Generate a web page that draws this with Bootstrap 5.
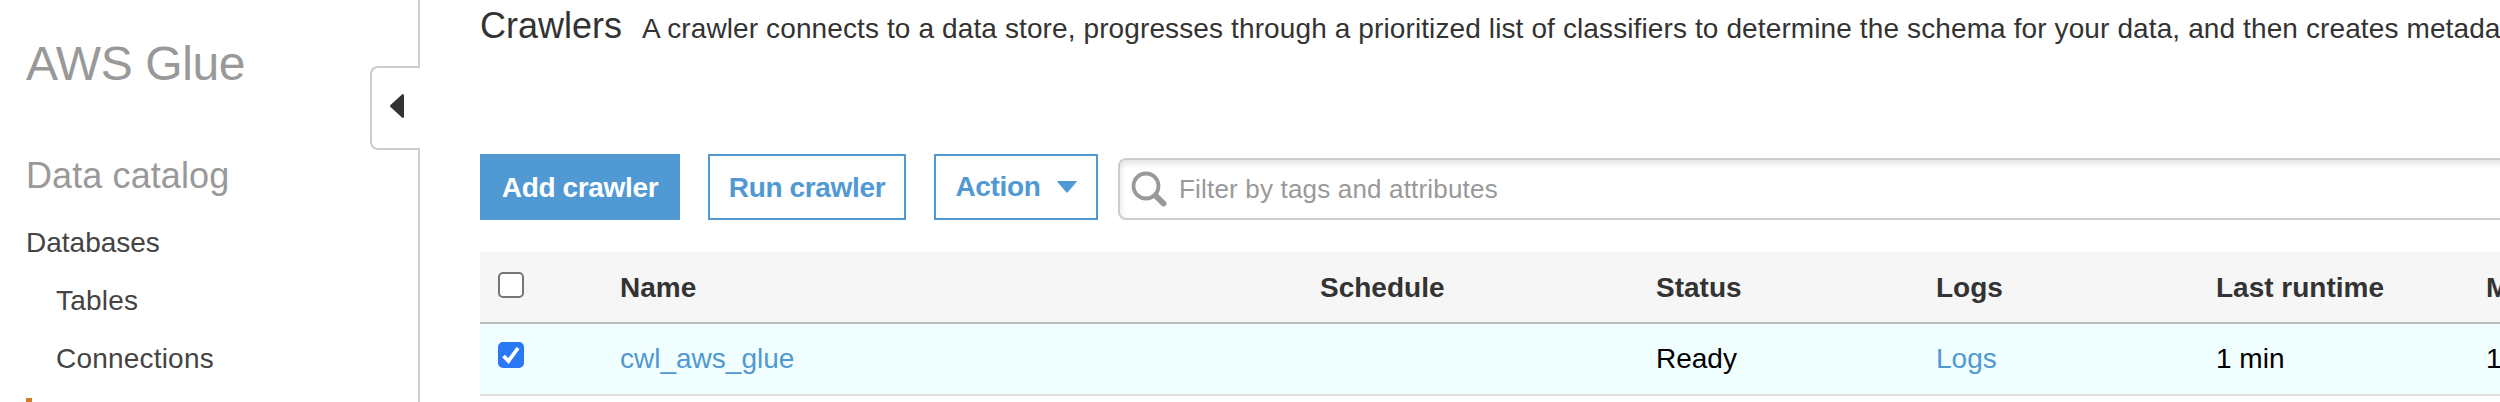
<!DOCTYPE html>
<html lang="en">
<head>
<meta charset="utf-8">
<title>AWS Glue - Crawlers</title>
<link href="https://cdn.jsdelivr.net/npm/bootstrap@5.3.0/dist/css/bootstrap.min.css" rel="stylesheet">
<style>
body{font-family:"Liberation Sans",Arial,sans-serif;font-size:28px;line-height:40px;color:#333;height:402px}
.sidebar{width:420px;border-right:2px solid #ccc;padding:36px 0 0 26px}
.brand-title{font-size:48px;line-height:56px;color:#999;letter-spacing:-.4px}
.section-title{font-size:36px;line-height:44px;color:#999;margin-top:62px;letter-spacing:.1px}
.side-links{margin-top:16px;line-height:58px}
.side-links a{color:#444}
.sub-link{padding-left:30px;letter-spacing:.2px}
.current-link{border-left:6px solid #d17b2c;height:4px;margin-top:10px}
.collapse-tab{top:66px;right:-2px;width:50px;height:84px;border:2px solid #ccc;border-right:0;border-radius:8px 0 0 8px}
.collapse-tab svg{margin:0 0 4px 18px}
.content-pane{padding:4px 0 0 60px;min-width:0}
.page-head{height:44px}
.page-title{font-size:36px;line-height:44px}
.page-intro{letter-spacing:.115px}
.toolbar{margin-top:106px;height:66px}
.btn-glue{--bs-btn-border-radius:0;--bs-btn-border-width:2px;--bs-btn-padding-x:0;--bs-btn-padding-y:0;--bs-btn-font-size:28px;--bs-btn-font-weight:700;--bs-btn-line-height:64px;--bs-btn-color:#5199d3;--bs-btn-border-color:#5199d3;--bs-btn-bg:#fff;height:66px;letter-spacing:-.35px}
.btn-glue-fill{--bs-btn-bg:#5199d3;--bs-btn-color:#fff}
.w-add{width:200px}.w-run{width:198px}.w-action{width:164px}
.filter-box{height:62px;margin:0 -20px 0 20px;border:2px solid #ccc;border-radius:8px;box-shadow:inset 0 3px 6px rgba(0,0,0,.12);padding-left:11px}
.filter-box input{border:0;outline:0;background:transparent;font-size:26px;letter-spacing:.18px;padding:0;margin-left:12px;height:40px}
.filter-box input::placeholder{color:#999;opacity:1}
.crawler-table{table-layout:fixed;width:2040px;margin-top:32px;--bs-table-bg:transparent;border-collapse:separate;border-spacing:0}
.crawler-table>:not(caption)>*>*{padding:0 0 0 18px;height:72px;vertical-align:middle;border-width:0;border-bottom:2px solid #ddd;color:#000;white-space:nowrap;box-shadow:none}
.crawler-table>thead>tr>th{height:72px;padding-top:2px;background:#f6f6f6;color:#333;border-bottom-color:#bbb}
.crawler-table>thead{border:0}
.crawler-table>tbody>tr>td{background:#f0feff}
.crawler-table a{color:#5199d3}
.crawler-table .form-check-input{display:block;width:26px;height:26px;margin:0 0 6px;border:2px solid #767676;border-radius:5px}
.crawler-table .form-check-input:checked{margin-bottom:8px;background-color:#2b78f6;border-color:#2b78f6;background-image:none}
.tick{left:0;top:0;pointer-events:none}
</style>
<script src="https://cdn.jsdelivr.net/npm/bootstrap@5.3.0/dist/js/bootstrap.bundle.min.js"></script>
</head>
<body class="d-flex overflow-hidden bg-white">
<nav class="sidebar position-relative flex-shrink-0">
  <h1 class="brand-title fw-normal mb-0">AWS Glue</h1>
  <h2 class="section-title fw-normal mb-0">Data catalog</h2>
  <ul class="side-links list-unstyled mb-0">
    <li><a class="text-decoration-none" href="#">Databases</a></li>
    <li class="sub-link"><a class="text-decoration-none" href="#">Tables</a></li>
    <li class="sub-link"><a class="text-decoration-none" href="#">Connections</a></li>
    <li class="current-link"></li>
  </ul>
  <div class="collapse-tab position-absolute bg-white d-flex align-items-center">
    <svg width="14" height="24" viewBox="0 0 14 24"><path d="M12.5 0Q14 0 14 1.5V22.500Q14 24 12.500 24L.5 13Q-.4 12 .5 11Z" fill="#333"/></svg>
  </div>
</nav>
<main class="content-pane flex-grow-1 overflow-hidden">
  <header class="page-head d-flex align-items-baseline text-nowrap">
    <h2 class="page-title fw-normal mb-0">Crawlers</h2>
    <span class="page-intro ms-3 ps-1">A crawler connects to a data store, progresses through a prioritized list of classifiers to determine the schema for your data, and then creates metada</span>
  </header>
  <div class="toolbar d-flex align-items-end">
    <button class="btn btn-glue btn-glue-fill w-add me-4">Add crawler</button>
    <button class="btn btn-glue w-run ms-1 me-4">Run crawler</button>
    <button class="btn btn-glue w-action ms-1 d-flex align-items-center justify-content-center">Action
      <svg class="ms-3" width="20" height="12" viewBox="0 0 20 12"><path d="M1 0H19Q20.300 0 19.500 1L11 11Q10 12 9 11L.5 1Q-.3 0 1 0Z" fill="#5199d3"/></svg>
    </button>
    <div class="filter-box d-flex align-items-center flex-grow-1">
      <svg width="36" height="36" viewBox="0 0 36 36" fill="none" stroke="#999"><circle cx="15" cy="15" r="12.500" stroke-width="3.800"/><path d="M25 25L32.500 32.500" stroke-width="6" stroke-linecap="round"/></svg>
      <input class="flex-grow-1" type="text" placeholder="Filter by tags and attributes">
    </div>
  </div>
  <table class="table crawler-table mb-0">
    <colgroup><col style="width:122px"><col style="width:700px"><col style="width:336px"><col style="width:280px"><col style="width:280px"><col style="width:270px"><col></colgroup>
    <thead><tr><th><input class="form-check-input" type="checkbox"></th><th>Name</th><th>Schedule</th><th>Status</th><th>Logs</th><th>Last runtime</th><th>M</th></tr></thead>
    <tbody><tr>
      <td><div class="position-relative"><input class="form-check-input" type="checkbox" checked><svg class="tick position-absolute" width="26" height="26" viewBox="0 0 26 26"><path d="M5.500 14L10.500 19L20 6" fill="none" stroke="#fff" stroke-width="3.800"/></svg></div></td>
      <td><a class="text-decoration-none" href="#">cwl_aws_glue</a></td><td></td><td>Ready</td><td><a class="text-decoration-none" href="#">Logs</a></td><td>1 min</td><td>1</td>
    </tr></tbody>
  </table>
</main>
</body>
</html>
